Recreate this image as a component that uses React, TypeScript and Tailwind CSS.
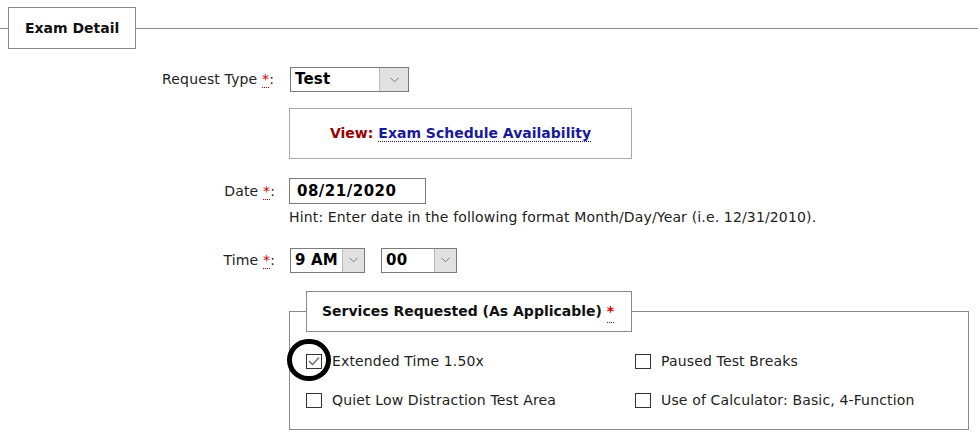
import React from "react";

const Req = () => (
  <abbr
    title="required"
    className="text-[#cc0000] no-underline border-b border-dotted border-[#cc0000] cursor-help"
  >
    *
  </abbr>
);

function Chevron() {
  return (
    <svg width="9" height="6" viewBox="0 0 9 6" fill="none">
      <path d="M0.5 0.8 L4.5 4.8 L8.5 0.8" stroke="#7a7a7a" strokeWidth="1" />
    </svg>
  );
}

function FakeSelect({
  value,
  width,
  buttonWidth,
}: {
  value: string;
  width: string;
  buttonWidth: string;
}) {
  return (
    <div className={`flex h-[25px] border border-[#7a7a7a] bg-white ${width}`}>
      <div className="flex flex-1 items-center pl-[4px] text-[15px] font-bold tracking-[0.2px] text-black">
        {value}
      </div>
      <div
        className={`flex items-center justify-center border-l border-[#b9b9b9] bg-[#e1e1e1] ${buttonWidth}`}
      >
        <Chevron />
      </div>
    </div>
  );
}

function Check({ checked, label }: { checked?: boolean; label: string }) {
  return (
    <label className="flex h-[16px] items-center gap-[10px] leading-[16px]">
      <span className="relative flex h-[15px] w-[16px] items-center justify-center border border-[#333] bg-white">
        {checked && (
          <>
            <svg width="12" height="10" viewBox="0 0 12 10" fill="none">
              <path d="M1 5 L4.5 8.5 L11 1.5" stroke="#777" strokeWidth="1.6" />
            </svg>
            <span className="pointer-events-none absolute left-[-20px] top-[-16px] h-[42px] w-[44px] rounded-full border-[5px] border-black" />
          </>
        )}
      </span>
      <span>{label}</span>
    </label>
  );
}

export default function App() {
  return (
    <div className="h-[438px] w-[978px] overflow-hidden bg-white font-['DejaVu_Sans',sans-serif] text-[14px] tracking-[0.15px] text-[#222]">
      <fieldset className="m-0 mt-[7px] border-0 border-t border-[#8a8a8a] p-0">
        <legend className="ml-[8px] flex h-[42px] items-center border border-[#8a8a8a] px-[16px] font-bold tracking-normal text-[#111]">
          Exam Detail
        </legend>

        <div className="mt-[18px] flex h-[25px] items-center">
          <div className="w-[275px] pr-[1px] text-right">
            Request Type <Req />:
          </div>
          <div className="ml-[15px]">
            <FakeSelect value="Test" width="w-[119px]" buttonWidth="w-[29px]" />
          </div>
        </div>

        <div className="ml-[289px] mt-[16px] flex h-[51px] w-[343px] items-center justify-center border border-[#a8a8a8] font-bold tracking-normal">
          <span className="text-[#990000]">View:</span>
          <a
            href="#"
            className="ml-[5px] border-b border-dotted border-[#1a1a99] leading-[16px] text-[#1a1a99] no-underline"
          >
            Exam Schedule Availability
          </a>
        </div>

        <div className="mt-[19px] flex h-[26px] items-center">
          <div className="w-[275px] text-right">
            Date <Req />:
          </div>
          <div className="ml-[14px] flex h-[26px] w-[137px] items-center border border-[#7a7a7a] pl-[7px] text-[15px] font-bold tracking-[0.5px] text-black">
            08/21/2020
          </div>
        </div>
        <div className="ml-[289px] mt-[5px] leading-[17px]">
          Hint: Enter date in the following format Month/Day/Year (i.e. 12/31/2010).
        </div>

        <div className="mt-[21px] flex h-[26px] items-center">
          <div className="w-[275px] text-right">
            Time <Req />:
          </div>
          <div className="ml-[15px] flex gap-[16px]">
            <FakeSelect value="9 AM" width="w-[75px]" buttonWidth="w-[22px]" />
            <FakeSelect value="00" width="w-[76px]" buttonWidth="w-[22px]" />
          </div>
        </div>

        <fieldset className="m-0 ml-[289px] mt-[18px] w-[680px] border border-[#8a8a8a] px-[16px] pb-[21px] pt-[21px]">
          <legend className="flex h-[41px] items-center border border-[#8a8a8a] pl-[15px] pr-[17px] font-bold tracking-normal text-[#111]">
            Services Requested (As Applicable)&nbsp;<Req />
          </legend>
          <div className="grid grid-cols-[329px_1fr] gap-y-[23px]">
            <Check checked label="Extended Time 1.50x" />
            <Check label="Paused Test Breaks" />
            <Check label="Quiet Low Distraction Test Area" />
            <Check label="Use of Calculator: Basic, 4-Function" />
          </div>
        </fieldset>
      </fieldset>
    </div>
  );
}
